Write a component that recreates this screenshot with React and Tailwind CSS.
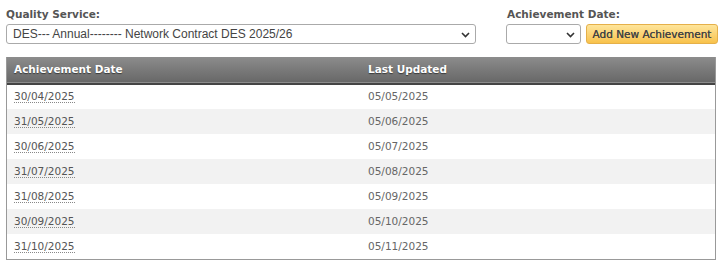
import { useState } from 'react';

const rows = [
  ['30/04/2025', '05/05/2025'],
  ['31/05/2025', '05/06/2025'],
  ['30/06/2025', '05/07/2025'],
  ['31/07/2025', '05/08/2025'],
  ['31/08/2025', '05/09/2025'],
  ['30/09/2025', '05/10/2025'],
  ['31/10/2025', '05/11/2025'],
];

function Chevron() {
  return (
    <svg width="9" height="6" viewBox="0 0 9 6" className="pointer-events-none absolute right-[6px] top-[8px]">
      <path d="M1 1l3.5 3.5L8 1" fill="none" stroke="#333" strokeWidth="1.6" />
    </svg>
  );
}

export default function App() {
  const [service, setService] = useState('des');

  return (
    <div className="w-[723px] h-[265px] bg-white px-[6px] pt-[5px] font-['DejaVu_Sans',Verdana,sans-serif]">
      {/* Filters */}
      <div className="flex items-start">
        <div className="flex flex-col w-[470px] shrink-0">
          <label className="block text-[10.5px] font-bold text-[#555] leading-[19px]">Quality Service:</label>
          <div className="relative h-[20px]">
            <select
              value={service}
              onChange={(e) => setService(e.target.value)}
              className="block appearance-none w-full h-[20px] border border-[#aaa] rounded-[3px] bg-white pl-[6px] text-[12px] text-[#444] font-['Liberation_Sans',Arial,sans-serif] outline-none"
            >
              <option value="des">DES--- Annual-------- Network Contract DES 2025/26</option>
            </select>
            <Chevron />
          </div>
        </div>

        <div className="flex flex-col ml-[30px] shrink-0">
          <label className="block text-[10.5px] font-bold text-[#555] leading-[19px] pl-[1px]">Achievement Date:</label>
          <div className="flex gap-[5px] h-[20px]">
            <div className="relative w-[75px] h-[20px] shrink-0">
              <select className="block appearance-none w-full h-[20px] border border-[#aaa] rounded-[3px] bg-white outline-none">
                <option value=""></option>
              </select>
              <Chevron />
            </div>
            <button className="w-[132px] shrink-0 whitespace-nowrap h-[20px] rounded-[3px] border border-[#e5b04a] bg-gradient-to-b from-[#fee59a] to-[#f8c24a] text-[10.5px] font-normal text-[#444] leading-none [text-shadow:0_0_0.4px_#444]">
              Add New Achievement
            </button>
          </div>
        </div>
      </div>

      {/* Table */}
      <div className="mt-[13px] w-[710px] border border-[#999] border-t-0">
        <table className="w-full border-collapse text-[10.5px]">
          <thead>
            <tr className="h-[27px] bg-gradient-to-b from-[#8c8c8c] to-[#686868] border-b-2 border-[#444]">
              <th className="w-1/2 text-left pl-[7px] font-bold text-white [text-shadow:0_1px_1px_rgba(0,0,0,0.5)]">Achievement Date</th>
              <th className="text-left pl-[7px] font-bold text-white [text-shadow:0_1px_1px_rgba(0,0,0,0.5)]">Last Updated</th>
            </tr>
          </thead>
          <tbody>
            {rows.map(([date, updated], i) => (
              <tr key={date} className={`h-[25px] ${i % 2 === 1 ? 'bg-[#f2f2f2]' : 'bg-white'}`}>
                <td className="pl-[7px] text-[#555]">
                  <span className="border-b border-dotted border-[#888]">{date}</span>
                </td>
                <td className="pl-[7px] text-[#666]">{updated}</td>
              </tr>
            ))}
          </tbody>
        </table>
      </div>
    </div>
  );
}
